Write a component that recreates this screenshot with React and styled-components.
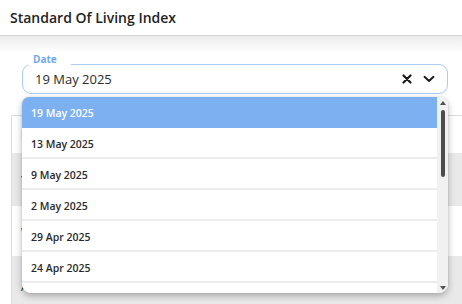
import styled, { createGlobalStyle } from "styled-components";

const Global = createGlobalStyle`
  html, body {
    margin: 0;
    padding: 0;
    background: #fff;
    font-family: "Open Sans", "Noto Sans", sans-serif;
    overflow: hidden;
  }
`;

const dates = [
  "19 May 2025",
  "13 May 2025",
  "9 May 2025",
  "2 May 2025",
  "29 Apr 2025",
  "24 Apr 2025",
  "17 Apr 2025",
];

const Page = styled.div`
  width: 462px;
  height: 304px;
  display: flex;
  flex-direction: column;
  overflow: hidden;
`;

const Header = styled.div`
  height: 35px;
  display: flex;
  align-items: center;
  padding-left: 10px;
  border-bottom: 1px solid #d6d6d6;
  font-size: 14px;
  font-weight: 600;
  color: #222;
  flex-shrink: 0;
`;

const Body = styled.div`
  flex: 1;
  display: flex;
  flex-direction: column;
  padding: 28px 0 0 11px;
  background: linear-gradient(#ececec, #fff 17px);
`;

const Field = styled.div`
  position: relative;
  height: 30px;
  margin: 0 14px 0 11px;
  box-sizing: border-box;
  border: 1px solid #a9cbf5;
  border-radius: 9px;
  display: flex;
  align-items: center;
  padding: 0 10px 0 12px;
  background: #fff;
`;

const FloatLabel = styled.span`
  position: absolute;
  left: 5px;
  top: -12px;
  padding: 0 14px 0 5px;
  background: #fff;
  font-size: 10px;
  font-weight: 700;
  color: #72a8ef;
  line-height: 12px;
  height: 12px;
`;

const Value = styled.span`
  flex: 1;
  font-size: 13px;
  color: #2b2b2b;
`;

const IconBtn = styled.span`
  display: flex;
  align-items: center;
  justify-content: center;
  width: 16px;
  height: 16px;
  margin-left: ${(p) => p.$gap || 0}px;
`;

const Menu = styled.div`
  position: absolute;
  left: -1px;
  right: -1px;
  top: calc(100% + 4px);
  height: 196px;
  display: flex;
  background: #fff;
  border-radius: 7px 7px 9px 9px;
  box-shadow: 0 3px 7px rgba(0, 0, 0, 0.28), 0 0 2px rgba(0, 0, 0, 0.12);
  overflow: hidden;
  z-index: 5;
`;

const List = styled.div`
  flex: 1;
  display: flex;
  flex-direction: column;
  overflow: hidden;
`;

const Item = styled.div`
  height: 31px;
  flex-shrink: 0;
  box-sizing: border-box;
  display: flex;
  align-items: center;
  padding: 3px 0 0 9px;
  font-size: 10.5px;
  font-weight: 600;
  color: ${(p) => (p.$active ? "#fff" : "#2a2a2a")};
  background: ${(p) => (p.$active ? "#7cb0f1" : "#fff")};
  border-bottom: 2px solid ${(p) => (p.$active ? "#7cb0f1" : "#ececec")};
`;

const Scroll = styled.div`
  width: 11px;
  flex-shrink: 0;
  background: #f1f1f1;
  display: flex;
  flex-direction: column;
  align-items: center;
  padding: 4px 0 3px;
  box-sizing: border-box;
`;

const Arrow = styled.span`
  width: 0;
  height: 0;
  border-left: 3px solid transparent;
  border-right: 3px solid transparent;
  ${(p) =>
    p.$down
      ? "border-top: 4px solid #505050; margin-top: auto;"
      : "border-bottom: 4px solid #505050;"}
`;

const Thumb = styled.span`
  width: 4px;
  height: 67px;
  margin-top: 5px;
  border-radius: 3px;
  background: #4c4c4c;
`;

const Table = styled.div`
  margin-top: 21px;
  display: flex;
  flex-direction: column;
  border-left: 1px solid #dcdcdc;
  flex: 1;
`;

const Row = styled.div`
  height: ${(p) => p.$h}px;
  flex-shrink: 0;
  display: flex;
  align-items: center;
  padding-left: 9px;
  font-size: 11px;
  color: #333;
  background: ${(p) => (p.$gray ? "#e9e9e9" : "#fff")};
  border-top: ${(p) => (p.$first ? "1px solid #dcdcdc" : "none")};
`;

function XIcon() {
  return (
    <svg width="10" height="10" viewBox="0 0 10 10">
      <path d="M1.5 1.5 L8.5 8.5 M8.5 1.5 L1.5 8.5" stroke="#1a1a1a" strokeWidth="2.2" strokeLinecap="round" />
    </svg>
  );
}

function Chevron() {
  return (
    <svg width="12" height="8" viewBox="0 0 12 8">
      <path d="M1.5 1.8 L6 6 L10.5 1.8" fill="none" stroke="#1a1a1a" strokeWidth="1.9" strokeLinecap="round" strokeLinejoin="round" />
    </svg>
  );
}

export default function App() {
  return (
    <Page>
      <Global />
      <Header>Standard Of Living Index</Header>
      <Body>
        <Field>
          <FloatLabel>Date</FloatLabel>
          <Value>19 May 2025</Value>
          <IconBtn>
            <XIcon />
          </IconBtn>
          <IconBtn $gap={6}>
            <Chevron />
          </IconBtn>
          <Menu>
            <List>
              {dates.map((d, i) => (
                <Item key={d} $active={i === 0}>
                  {d}
                </Item>
              ))}
            </List>
            <Scroll>
              <Arrow />
              <Thumb />
              <Arrow $down />
            </Scroll>
          </Menu>
        </Field>
        <Table>
          <Row $h={37} $first>Date</Row>
          <Row $h={53} $gray>Year</Row>
          <Row $h={50}>Week</Row>
          <Row $h={60} $gray>All</Row>
        </Table>
      </Body>
    </Page>
  );
}
